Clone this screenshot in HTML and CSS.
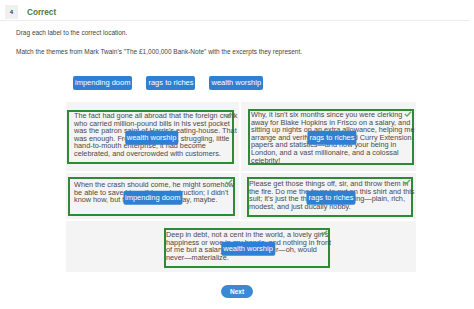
FILE: index.html
```html
<!DOCTYPE html>
<html>
  <head>
    <title>Question 4</title>
    <link rel="stylesheet" href="styles.css">
  </head>

  <body>

    <div class="qhead">
      <span class="qnum">4</span>
      <span class="qstatus">Correct</span>
    </div>

    <div class="qbody">
      <p class="intro">Drag each label to the correct location.</p>
      <p class="intro intro_second">Match the themes from Mark Twain's "The £1,000,000 Bank-Note" with the excerpts they represent.</p>

      <div class="tray">
        <span class="tag">impending doom</span>
        <span class="tag">rags to riches</span>
        <span class="tag">wealth worship</span>
      </div>

      <div class="board">
        <div class="cell cell_one">
          <div class="drop drop_one">
            <p class="excerpt">The fact had gone all abroad that the foreign crank<br>who carried million-pound bills in his vest pocket<br>was the patron saint of Harris's eating-house. That<br>was enough. From being a poor, struggling, little<br>hand-to-mouth enterprise, it had become<br>celebrated, and overcrowded with customers.</p>
            <span class="tick"><svg width="8" height="6" viewBox="0 0 8 6"><polyline points="0.8,3 3,5 7.2,0.8" fill="none" stroke="#5cae5c" stroke-width="1.3"/></svg></span>
            <span class="tag placed">wealth worship</span>
          </div>
        </div>
        <div class="cell cell_two">
          <div class="drop drop_two">
            <p class="excerpt">Why, it isn't six months since you were clerking<br>away for Blake Hopkins in Frisco on a salary, and<br>sitting up nights on an extra allowance, helping me<br>arrange and verify the Gould and Curry Extension<br>papers and statistics—and now your being in<br>London, and a vast millionaire, and a colossal<br>celebrity!</p>
            <span class="tick"><svg width="8" height="6" viewBox="0 0 8 6"><polyline points="0.8,3 3,5 7.2,0.8" fill="none" stroke="#5cae5c" stroke-width="1.3"/></svg></span>
            <span class="tag placed">rags to riches</span>
          </div>
        </div>
        <div class="cell cell_three">
          <div class="drop drop_three">
            <p class="excerpt">When the crash should come, he might somehow<br>be able to save himself from destruction; I didn't<br>know how, but there might be a way, maybe.</p>
            <span class="tick"><svg width="8" height="6" viewBox="0 0 8 6"><polyline points="0.8,3 3,5 7.2,0.8" fill="none" stroke="#5cae5c" stroke-width="1.3"/></svg></span>
            <span class="tag placed">impending doom</span>
          </div>
        </div>
        <div class="cell cell_four">
          <div class="drop drop_four">
            <p class="excerpt">Please get those things off, sir, and throw them in<br>the fire. Do me the favor to put on this shirt and this<br>suit; it's just the thing, the very thing—plain, rich,<br>modest, and just ducally nobby.</p>
            <span class="tick"><svg width="8" height="6" viewBox="0 0 8 6"><polyline points="0.8,3 3,5 7.2,0.8" fill="none" stroke="#5cae5c" stroke-width="1.3"/></svg></span>
            <span class="tag placed">rags to riches</span>
          </div>
        </div>
        <div class="cell cell_five">
          <div class="drop drop_five">
            <p class="excerpt">Deep in debt, not a cent in the world, a lovely girl's<br>happiness or woe in my hands, and nothing in front<br>of me but a salary that might never—oh, would<br>never—materialize.</p>
            <span class="tick"><svg width="8" height="6" viewBox="0 0 8 6"><polyline points="0.8,3 3,5 7.2,0.8" fill="none" stroke="#5cae5c" stroke-width="1.3"/></svg></span>
            <span class="tag placed">wealth worship</span>
          </div>
        </div>
      </div>

      <div class="actions">
        <button class="next">Next</button>
      </div>
    </div>

  </body>
</html>
```

FILE: styles.css
```css
* {
  padding: 0;
  margin: 0;
  box-sizing: border-box;
  font-family: "Liberation Sans", Arial, sans-serif;
}

body {
  background: #fff;
  width: 474px;
}

.qhead {
  display: flex;
  align-items: center;
  height: 21px;
  padding: 5px 0 1px 5px;
  margin-right: 4px;
  border-bottom: 1px solid #ececec;
}
.qnum {
  width: 13px;
  height: 14px;
  line-height: 14px;
  text-align: center;
  background: #f0f0f0;
  font-size: 6px;
  font-weight: 700;
  color: #333;
}
.qstatus {
  margin-left: 9px;
  font-size: 8.2px;
  font-weight: 700;
  color: #4b7a3e;
}

.qbody {
  padding-top: 8px;
}
.intro {
  padding-left: 16px;
  font-size: 6.5px;
  line-height: 8px;
  color: #444;
}
.intro_second {
  margin-top: 11px;
}

.tray {
  display: flex;
  gap: 14px;
  padding-left: 73px;
  margin-top: 20px;
}
.tag {
  display: inline-block;
  height: 14px;
  padding: 1px 2px 0 2px;
  font-size: 7.5px;
  line-height: 11px;
  color: #fff;
  background: #2f80d2;
  border-radius: 2px;
  white-space: nowrap;
}

.board {
  display: grid;
  grid-template-columns: 173px 175px;
  gap: 2px;
  width: 350px;
  margin: 12px 0 0 66px;
  background: #fff;
}
.cell {
  background: #f4f4f4;
}
.cell_one { padding: 8px 0 7px 1px; }
.cell_two { padding: 7px 0 6px 7px; }
.cell_three { padding: 4px 0 3px 2px; }
.cell_four { padding: 4px 0 2px 6px; }
.cell_five {
  grid-column: 1 / 3;
  padding: 7px 0 4px 98px;
}

.drop {
  position: relative;
  width: 167px;
  border: 2px solid #2f8a35;
}
.drop_one { height: 54px; padding: 0 0 0 5px; }
.drop_two { height: 56px; padding: 0 0 0 1px; width: 166px; }
.drop_three { height: 39px; padding: 2px 0 0 4px; }
.drop_four { height: 40px; padding: 1px 0 0 0; width: 166px; }
.drop_five { height: 40px; padding: 1px 0 0 0; width: 166px; }

.excerpt {
  font-size: 7.3px;
  line-height: 7.6px;
  color: #4a4a4a;
  white-space: nowrap;
}

.tick {
  position: absolute;
  top: 0;
  right: 0;
  line-height: 0;
}

.placed {
  position: absolute;
  left: 50%;
  top: 50%;
  transform: translate(-48%, -45%);
}

.actions {
  display: flex;
  justify-content: center;
  margin-top: 13px;
}
.next {
  width: 32px;
  height: 13px;
  border: none;
  border-radius: 7px;
  background: #3a88d6;
  color: #fff;
  font-size: 6.5px;
  font-weight: 700;
}
```
